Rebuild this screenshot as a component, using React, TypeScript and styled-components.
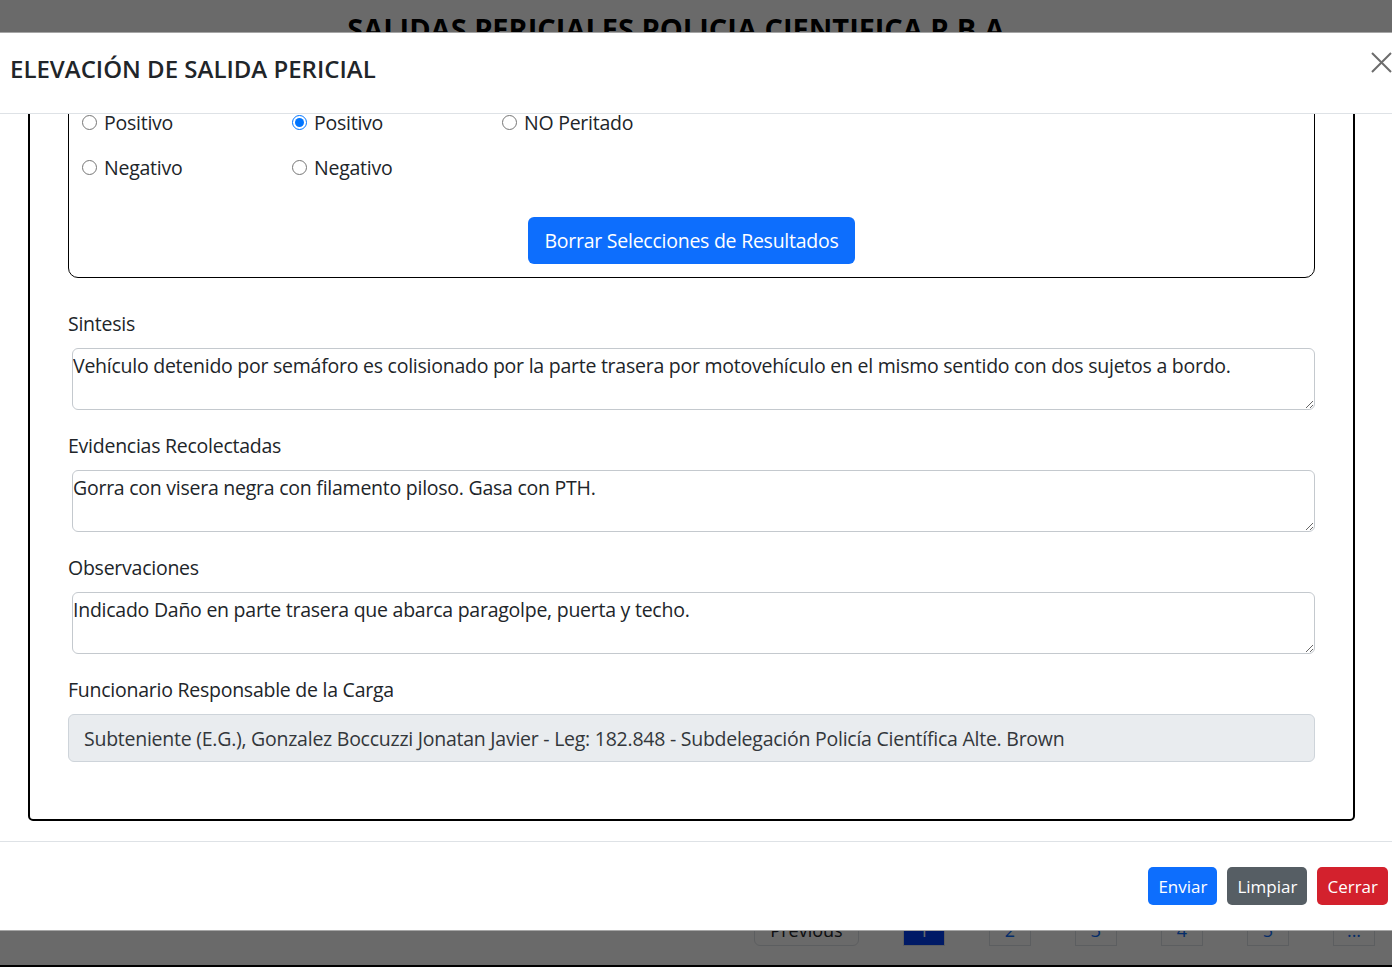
import React, { useLayoutEffect, useRef } from 'react';
import styled, { createGlobalStyle } from 'styled-components';

const GlobalStyle = createGlobalStyle`
  * { box-sizing: border-box; }
  html, body { margin: 0; padding: 0; }
  body {
    font-family: "Open Sans", "Noto Sans", sans-serif;
    color: #212529;
    background: #fff;
    overflow: hidden;
  }
`;

const text = `
  font-size: 19.5px;
  letter-spacing: -0.25px;
  line-height: 30px;
`;

const Page = styled.div`
  height: 100vh;
  display: flex;
  flex-direction: column;
  border-bottom: 2px solid #000;
`;

const PageTitle = styled.h1`
  margin: 12px 0 0;
  padding-right: 32px;
  text-align: center;
  font-size: 29px;
  font-weight: 700;
  line-height: 1.2;
  color: #000;
`;

const Pager = styled.nav`
  margin-top: auto;
  display: flex;
  justify-content: flex-end;
  gap: 44px;
  padding: 0 17px 19px 0;
`;

const PageItem = styled.span<{ $active?: boolean; $wide?: boolean }>`
  display: flex;
  align-items: center;
  justify-content: center;
  height: 40px;
  min-width: ${p => (p.$wide ? '105px' : '42px')};
  border: 1px solid #dee2e6;
  border-radius: ${p => (p.$wide ? '6px' : '0')};
  background: ${p => (p.$active ? '#0040f5' : '#fff')};
  color: ${p => (p.$active ? '#fff' : p.$wide ? '#212529' : '#0d6efd')};
  font-size: 18px;
  padding-top: 8px;
`;

const Backdrop = styled.div`
  position: fixed;
  inset: 0;
  background: rgba(0, 0, 0, 0.585);
`;

const Modal = styled.div`
  position: fixed;
  top: 32px;
  left: 0;
  right: 0;
  height: 899px;
  display: flex;
  flex-direction: column;
  background: #fff;
  border-top: 1px solid rgba(0, 0, 0, 0.35);
  border-bottom: 1px solid rgba(0, 0, 0, 0.35);
`;

const Header = styled.header`
  flex: 0 0 81px;
  display: flex;
  align-items: flex-start;
  justify-content: space-between;
  padding-left: 10px;
  border-bottom: 1px solid #dee2e6;
`;

const Title = styled.h5`
  margin: 21px 0 0;
  font-size: 24px;
  font-weight: 600;
  letter-spacing: 0;
  line-height: 30px;
  color: #212529;
`;

const CloseButton = styled.button`
  margin-top: 19px;
  width: 21px;
  height: 21px;
  padding: 0;
  border: none;
  background: transparent;
  color: #6c6c6c;
  display: flex;
`;

const Body = styled.div`
  flex: 1;
  overflow-y: auto;
  scrollbar-width: none;
  padding: 0 37px 20px 28px;
  &::-webkit-scrollbar { display: none; }
`;

const OuterBox = styled.div`
  border: 2px solid #000;
  border-radius: 5px;
  padding: 38px 38px 57px;
`;

const InnerBox = styled.fieldset`
  margin: 0 0 31px;
  border: 1px solid #000;
  border-radius: 10px;
  padding: 24px 13px 13px;
`;

const RadioGrid = styled.div`
  display: grid;
  grid-template-columns: repeat(3, 210px);
  row-gap: 15px;
`;

const RadioLabel = styled.label`
  display: flex;
  align-items: center;
  gap: 7px;
  ${text}
  input {
    width: 15px;
    height: 15px;
    margin: 0 0 2px;
  }
`;

const ButtonRow = styled.div`
  display: flex;
  justify-content: center;
  margin-top: 34px;
`;

const ClearButton = styled.button`
  height: 47px;
  padding: 0 16px;
  border: none;
  border-radius: 6px;
  background: #0d6efd;
  color: #fff;
  font-family: inherit;
  ${text}
`;

const Field = styled.div`
  margin-bottom: 21px;
  &:last-child { margin-bottom: 0; }
`;

const Label = styled.label`
  display: block;
  margin-bottom: 9px;
  ${text}
`;

const TextArea = styled.textarea`
  display: block;
  width: calc(100% - 4px);
  height: 62px;
  margin-left: 4px;
  padding: 2px 2px 2px 0;
  border: 1px solid #c4c9ce;
  border-radius: 6px;
  font-family: inherit;
  color: #212529;
  ${text}
`;

const ReadOnly = styled.input`
  display: block;
  width: 100%;
  height: 48px;
  padding: 0 15px;
  border: 1px solid #ced4da;
  border-radius: 6px;
  background: #e9ecef;
  font-family: inherit;
  color: #33373b;
  ${text}
`;

const Footer = styled.footer`
  flex: 0 0 89px;
  display: flex;
  align-items: center;
  justify-content: flex-end;
  gap: 10px;
  padding-right: 4px;
  border-top: 1px solid #dee2e6;
`;

const ActionButton = styled.button<{ $color: string }>`
  height: 38px;
  padding: 0 10px;
  border: none;
  border-radius: 5px;
  background: ${p => p.$color};
  color: #fff;
  font-family: inherit;
  font-size: 17px;
`;

const fields = [
  {
    id: 'sintesis',
    label: 'Sintesis',
    value:
      'Vehículo detenido por semáforo es colisionado por la parte trasera por motovehículo en el mismo sentido con dos sujetos a bordo.',
  },
  {
    id: 'evidencias',
    label: 'Evidencias Recolectadas',
    value: 'Gorra con visera negra con filamento piloso. Gasa con PTH.',
  },
  {
    id: 'observaciones',
    label: 'Observaciones',
    value: 'Indicado Daño en parte trasera que abarca paragolpe, puerta y techo.',
  },
];

export default function App() {
  const bodyRef = useRef<HTMLDivElement>(null);

  // the modal body is shown scrolled to its end
  useLayoutEffect(() => {
    if (bodyRef.current) bodyRef.current.scrollTop = bodyRef.current.scrollHeight;
  }, []);

  return (
    <>
      <GlobalStyle />
      <Page>
        <PageTitle>SALIDAS PERICIALES POLICIA CIENTIFICA P.B.A.</PageTitle>
        <Pager>
          <PageItem $wide>Previous</PageItem>
          <PageItem $active>1</PageItem>
          <PageItem>2</PageItem>
          <PageItem>3</PageItem>
          <PageItem>4</PageItem>
          <PageItem>5</PageItem>
          <PageItem>...</PageItem>
        </Pager>
      </Page>
      <Backdrop />
      <Modal>
        <Header>
          <Title>ELEVACIÓN DE SALIDA PERICIAL</Title>
          <CloseButton aria-label="Cerrar">
            <svg width="21" height="21" viewBox="0 0 21 21">
              <path d="M1 1L20 20M20 1L1 20" stroke="currentColor" strokeWidth="2" fill="none" />
            </svg>
          </CloseButton>
        </Header>
        <Body ref={bodyRef}>
          <OuterBox>
            <InnerBox>
              <RadioGrid>
                <RadioLabel><input type="radio" name="r1" />Positivo</RadioLabel>
                <RadioLabel><input type="radio" name="r2" defaultChecked />Positivo</RadioLabel>
                <RadioLabel><input type="radio" name="r3" />NO Peritado</RadioLabel>
                <RadioLabel><input type="radio" name="r1" />Negativo</RadioLabel>
                <RadioLabel><input type="radio" name="r2" />Negativo</RadioLabel>
              </RadioGrid>
              <ButtonRow>
                <ClearButton type="button">Borrar Selecciones de Resultados</ClearButton>
              </ButtonRow>
            </InnerBox>
            {fields.map(f => (
              <Field key={f.id}>
                <Label htmlFor={f.id}>{f.label}</Label>
                <TextArea id={f.id} defaultValue={f.value} />
              </Field>
            ))}
            <Field>
              <Label htmlFor="funcionario">Funcionario Responsable de la Carga</Label>
              <ReadOnly
                id="funcionario"
                disabled
                value="Subteniente (E.G.), Gonzalez Boccuzzi Jonatan Javier - Leg: 182.848 - Subdelegación Policía Científica Alte. Brown"
                readOnly
              />
            </Field>
          </OuterBox>
        </Body>
        <Footer>
          <ActionButton type="button" $color="#0d6efd">Enviar</ActionButton>
          <ActionButton type="button" $color="#565e64">Limpiar</ActionButton>
          <ActionButton type="button" $color="#d3212d">Cerrar</ActionButton>
        </Footer>
      </Modal>
    </>
  );
}
